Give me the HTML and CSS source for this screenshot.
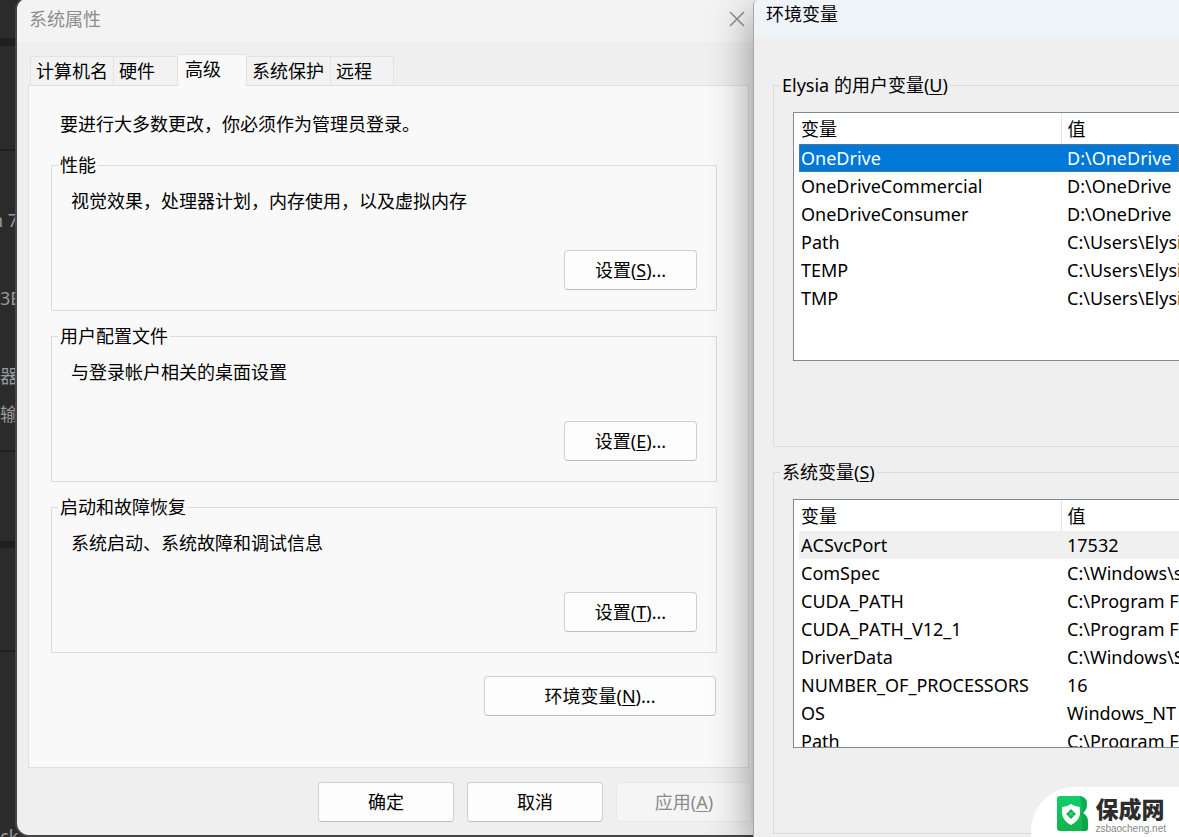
FILE: index.html
```html
<!DOCTYPE html>
<html lang="zh-CN">
<head>
<meta charset="utf-8">
<title>系统属性</title>
<link rel="stylesheet" href="styles.css">
</head>
<body>
<div class="desktop">
  <div class="backdrop">
    <div class="card card-top"></div>
    <div class="card card-name"></div>
    <div class="card card-specs">
      <p>n 7</p>
      <p>3E</p>
      <p class="near">器</p>
      <p>输</p>
    </div>
    <div class="card card-links"></div>
    <div class="card card-row"></div>
    <div class="card card-rest"><p>ck</p></div>
  </div>

  <section class="window properties" aria-label="系统属性">
    <header class="titlebar">
      <h1>系统属性</h1>
      <button class="close" type="button" aria-label="关闭">
        <svg viewBox="0 0 16 16" width="16" height="16"><path d="M1 1 15 15M15 1 1 15" fill="none" stroke="#8d8d8d" stroke-width="1.5"/></svg>
      </button>
    </header>
    <div class="tabs" role="tablist">
      <button type="button" role="tab">计算机名</button>
      <button type="button" role="tab" class="hardware">硬件</button>
      <button type="button" role="tab" class="active" aria-selected="true">高级</button>
      <button type="button" role="tab">系统保护</button>
      <button type="button" role="tab" class="remote">远程</button>
    </div>
    <div class="panel" role="tabpanel">
      <p class="note">要进行大多数更改，你必须作为管理员登录。</p>
      <fieldset class="group">
        <legend>性能</legend>
        <p>视觉效果，处理器计划，内存使用，以及虚拟内存</p>
        <button class="button" type="button">设置(<u>S</u>)...</button>
      </fieldset>
      <fieldset class="group">
        <legend>用户配置文件</legend>
        <p>与登录帐户相关的桌面设置</p>
        <button class="button" type="button">设置(<u>E</u>)...</button>
      </fieldset>
      <fieldset class="group">
        <legend>启动和故障恢复</legend>
        <p>系统启动、系统故障和调试信息</p>
        <button class="button" type="button">设置(<u>T</u>)...</button>
      </fieldset>
      <button class="button wide" type="button">环境变量(<u>N</u>)...</button>
    </div>
    <footer class="actions">
      <button class="button" type="button">确定</button>
      <button class="button" type="button">取消</button>
      <button class="button" type="button" disabled>应用(<u>A</u>)</button>
    </footer>
  </section>

  <section class="window environment" aria-label="环境变量">
    <header class="titlebar"><h1>环境变量</h1></header>
    <div class="env-body">
      <fieldset class="vars">
        <legend>Elysia 的用户变量(<u>U</u>)</legend>
        <div class="list">
          <table>
            <thead><tr><th>变量</th><th>值</th></tr></thead>
            <tbody>
              <tr class="selected"><td>OneDrive</td><td>D:\OneDrive</td></tr>
              <tr><td>OneDriveCommercial</td><td>D:\OneDrive</td></tr>
              <tr><td>OneDriveConsumer</td><td>D:\OneDrive</td></tr>
              <tr><td>Path</td><td>C:\Users\Elysia</td></tr>
              <tr><td>TEMP</td><td>C:\Users\Elysia</td></tr>
              <tr><td>TMP</td><td>C:\Users\Elysia</td></tr>
            </tbody>
          </table>
        </div>
      </fieldset>
      <fieldset class="vars">
        <legend>系统变量(<u>S</u>)</legend>
        <div class="list">
          <table>
            <thead><tr><th>变量</th><th>值</th></tr></thead>
            <tbody>
              <tr class="inactive"><td>ACSvcPort</td><td>17532</td></tr>
              <tr><td>ComSpec</td><td>C:\Windows\system32</td></tr>
              <tr><td>CUDA_PATH</td><td>C:\Program Files</td></tr>
              <tr><td>CUDA_PATH_V12_1</td><td>C:\Program Files</td></tr>
              <tr><td>DriverData</td><td>C:\Windows\System32</td></tr>
              <tr><td>NUMBER_OF_PROCESSORS</td><td>16</td></tr>
              <tr><td>OS</td><td>Windows_NT</td></tr>
              <tr><td>Path</td><td>C:\Program Files</td></tr>
            </tbody>
          </table>
        </div>
      </fieldset>
    </div>
  </section>

  <div class="brand">
    <svg viewBox="0 0 32 36" width="32" height="36" aria-hidden="true">
      <defs><linearGradient id="leaf" x1="0" y1="0" x2="0" y2="1"><stop offset="0" stop-color="#10d06a"/><stop offset="1" stop-color="#12b24c"/></linearGradient></defs>
      <path d="M3 0H23Q30 1 30 8Q30 14 26 17Q31 20 31 26V32Q31 35 28 35H3Q0 35 0 32V3Q0 0 3 0Z" fill="url(#leaf)"/>
      <path d="M23 0Q30 1 30 8Q30 14 26 17Q31 20 31 26V32Q31 35 28 35Q25 34 25 31V21L23 18L25 14Z" fill="#0a9c48" opacity=".65"/>
      <path d="M14 8Q18 11 23 11V18Q22 25 14 29Q6 25 5 18V11Q10 11 14 8Z" fill="#fff"/>
      <path d="m14 13 5 5-5 5-5-5Z" fill="#12b45a"/>
      <path d="m11.500 15.500 5 5M16.500 15.500l-5 5" stroke="#7bd7a0" stroke-width=".7"/>
    </svg>
    <div class="brand-text"><strong>保成网</strong><span>zsbaocheng.net</span></div>
  </div>
</div>
</body>
</html>
```
FILE: styles.css
```css
* { box-sizing: border-box; }

body {
  margin: 0;
  color: #000;
  font: 18px/24px "Noto Sans", "Noto Sans CJK SC", sans-serif;
  font-kerning: none;
}

h1, p { margin: 0; font-size: 18px; font-weight: 400; }

button {
  font: inherit;
  font-kerning: none;
  color: inherit;
  padding: 0;
}

u { text-underline-offset: 2px; text-decoration-thickness: 1px; }

.desktop {
  position: relative;
  height: 100vh;
  min-height: 837px;
  overflow: hidden;
  background: #1f1f1f;
}

/* dimmed settings page behind the dialogs */
.backdrop {
  display: flex;
  flex-direction: column;
  height: 100%;
  color: #9a9a9a;
  white-space: nowrap;
}
.card { background: #2b2b2b; overflow: hidden; }
.card-top { height: 38px; margin-bottom: 8px; }
.card-name { height: 103px; margin-bottom: 2px; }
.card-specs { height: 299px; margin-bottom: 2px; padding-top: 57px; }
.card-specs p { margin-bottom: 54px; }
.card-specs p.near { margin-bottom: 14px; }
.card-specs p:first-child { margin-left: -8px; }
.card-links { height: 89px; margin-bottom: 7px; }
.card-row { height: 102px; margin-bottom: 2px; }
.card-rest { flex: 1; display: flex; align-items: flex-end; }
.card-rest p { height: 13px; }

.window { position: absolute; background: #efefef; }

.properties {
  left: 17px;
  top: -2px;
  width: 746px;
  border-radius: 12px;
  overflow: hidden;
  box-shadow: 0 0 0 2px #454545;
  padding: 0 14px 13px 11px;
}
.properties .titlebar {
  display: flex;
  justify-content: space-between;
  align-items: center;
  height: 44px;
  margin: 0 -14px 0 -11px;
  padding: 0 17px 2px 12px;
  background: #f3f3f3;
  color: #8d8d8d;
}
.close { border: 0; background: none; width: 18px; height: 18px; line-height: 0; }

.tabs {
  display: flex;
  align-items: flex-end;
  padding: 12px 0 0 2px;
  height: 43px;
}
.tabs button {
  height: 29px;
  padding: 0 6px 0 5px;
  border: 1px solid #e2e2e2;
  border-width: 1px 1px 0 0;
  background: #f2f2f2;
}
.tabs button:first-child { border-left-width: 1px; padding-right: 5px; }
.tabs .hardware { padding-right: 22px; }
.tabs .remote { padding-right: 21px; }
.tabs .active {
  height: 32px;
  margin-bottom: -1px;
  padding: 0 25px 4px 7px;
  background: #f9f9f9;
  z-index: 1;
}

.panel {
  display: flex;
  flex-direction: column;
  border: 1px solid #e0e0e0;
  background: #f9f9f9;
  padding: 26px 31px 51px 22px;
}
.note { padding-left: 9px; margin-bottom: 17px; }

.group {
  display: flex;
  flex-direction: column;
  gap: 37px;
  margin: 0 0 13px;
  border: 1px solid #dcdcdc;
  padding: 12px 19px 20px;
}
.group legend { margin-left: -13px; padding: 0 2px; }

.button {
  height: 40px;
  border: 1px solid #d0d0d0;
  border-bottom-color: #bcbcbc;
  border-radius: 4px;
  background: #fdfdfd;
}
.group .button { align-self: flex-end; width: 133px; }
.wide { align-self: flex-end; width: 232px; margin: 10px 1px 0 0; }

.actions {
  display: flex;
  justify-content: flex-end;
  gap: 13px;
  padding: 14px 0 0;
  margin-right: -3px;
}
.actions .button { width: 136px; }
.button:disabled { color: #8b8b8b; background: #f5f5f5; border-color: #e9e9e9; }

.environment {
  left: 753px;
  right: 0;
  top: 0;
  bottom: 0;
  border-left: 1px solid #a4a6a8;
  border-top-left-radius: 5px;
  box-shadow: 0 12px 44px rgba(0, 0, 0, .42);
}
.environment .titlebar {
  height: 37px;
  padding: 2px 12px;
  background: #eff4f9;
  border-top-left-radius: 5px;
}
.env-body { padding: 36px 0 0 19px; }

.vars {
  height: 374px;
  min-width: 0;
  margin: 0 0 13px;
  border: 1px solid #dcdcdc;
  border-right: 0;
  padding: 15px 0 0 19px;
}
.vars legend { margin-left: -13px; padding: 0 2px; }

.list {
  height: 249px;
  overflow: hidden;
  border: 1px solid #828790;
  border-right: 0;
  background: #fff;
  padding-left: 5px;
}
table { width: 100%; table-layout: fixed; border-collapse: collapse; }
th, td {
  height: 28px;
  padding: 0 0 0 2px;
  line-height: 24px;
  font-weight: 400;
  text-align: left;
  white-space: nowrap;
  overflow: hidden;
}
th { height: 31px; padding-top: 1px; }
th:first-child { width: 262px; border-right: 1px solid #e5e5e5; }
th:last-child, td:last-child { padding-left: 6px; }
.selected { background: #0078d7; color: #fff; outline: 1px dotted #8a7a66; outline-offset: -1px; }
.inactive { background: #f0f0f0; }

.brand {
  position: absolute;
  right: 0;
  bottom: 0;
  display: flex;
  align-items: flex-start;
  gap: 6px;
  height: 50px;
  padding: 9px 13px 0 26px;
  border-top-left-radius: 44px;
  background: #fff;
}
.brand-text { display: flex; flex-direction: column; color: #2d2d2d; }
.brand-text strong { font-size: 23px; line-height: 27px; font-weight: 900; }
.brand-text span { font: 10px/12px "Liberation Sans", sans-serif; color: #888; }
```
